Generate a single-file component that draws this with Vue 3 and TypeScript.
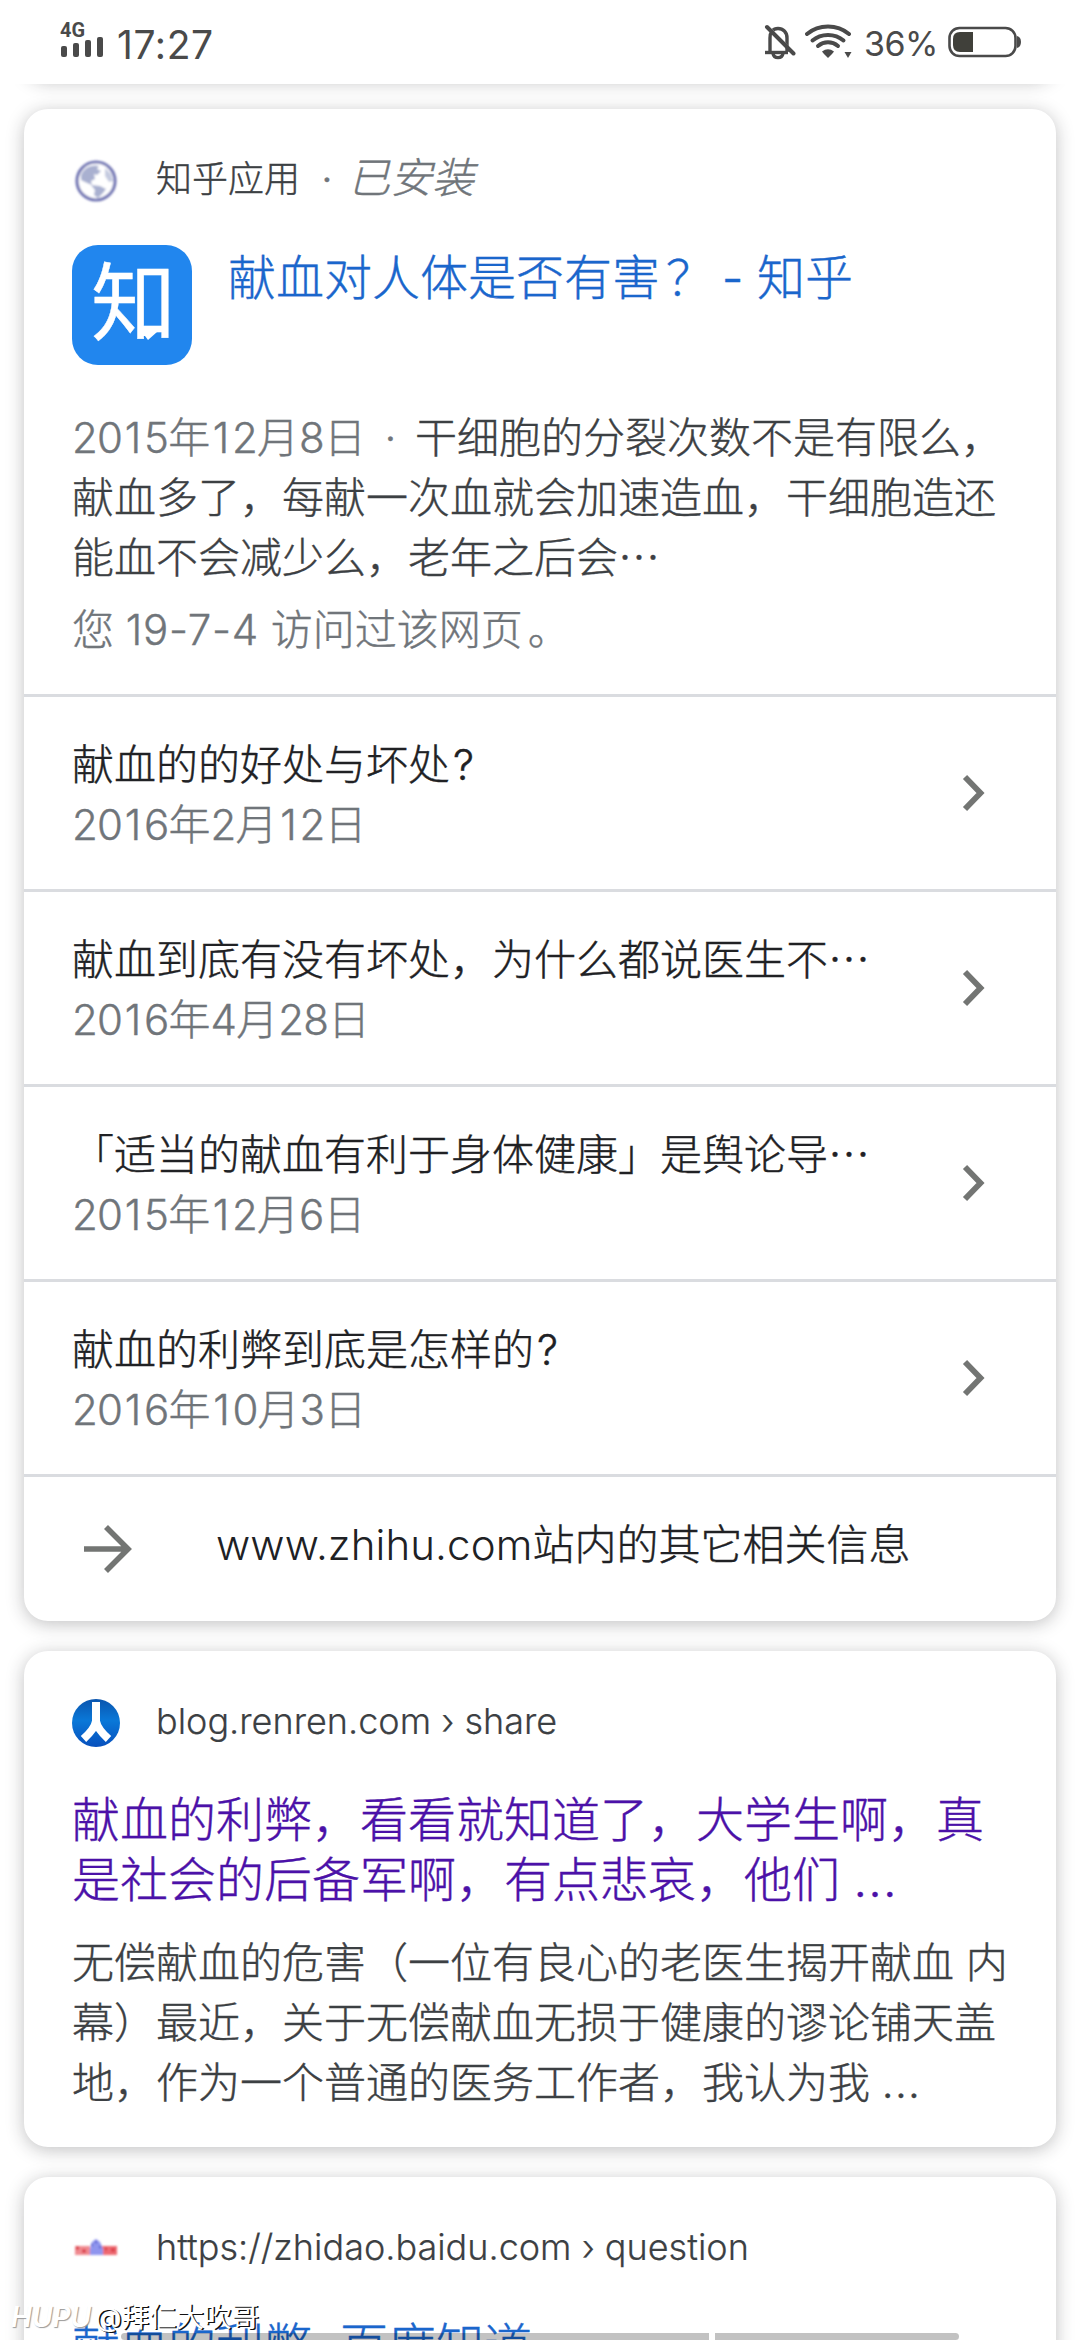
<script setup lang="ts">
interface Related {
  title: string
  end: string
  date: string
}

const related: Related[] = [
  { title: '献血的的好处与坏处', end: '?', date: '2016年2月12日' },
  { title: '献血到底有没有坏处，为什么都说医生不', end: '…', date: '2016年4月28日' },
  { title: '「适当的献血有利于身体健康」是舆论导', end: '…', date: '2015年12月6日' },
  { title: '献血的利弊到底是怎样的', end: '?', date: '2016年10月3日' },
]

const firstDate = '2015年12月8日'

// Splits a date so that the narrow figure 1 and the other figures can be spaced apart.
function pieces(date: string): { text: string; kind: string }[] {
  return date
    .split(/(1|[年月日])/)
    .filter((t) => t !== '')
    .map((text) => ({ text, kind: text === '1' ? 'one' : /\d/.test(text) ? 'fig' : '' }))
}
</script>

<template>
  <div class="screen">
    <header class="status">
      <svg class="signal" width="46" height="38" viewBox="0 0 46 38">
        <g fill="#4a4a4a">
          <rect x="1" y="26" width="6" height="11" rx="2" />
          <rect x="13" y="23" width="6" height="14" rx="2" />
          <rect x="25" y="20" width="6" height="17" rx="2" />
          <rect x="37" y="17" width="6" height="20" rx="2" />
        </g>
        <text x="0" y="16.5" class="net" textLength="25" lengthAdjust="spacingAndGlyphs">4G</text>
      </svg>
      <span class="clock">17:27</span>
      <span class="grow"></span>
      <svg class="bell" width="32" height="36" viewBox="0 0 32 36">
        <g fill="none" stroke="#4a4a4a" stroke-width="3.4">
          <path d="M6 27V14C6 8 9 4.5 14 4.5S23 8 23 14V28" />
          <path d="M1 28.5H24" />
          <path d="M9 29.5C10 35 18 35 19 29.5" />
        </g>
        <path d="M1 5.500L28 33" stroke="#fff" stroke-width="2.500" transform="translate(2.500 -3)" />
        <path d="M3 3L29.500 29.500" stroke="#4a4a4a" stroke-width="4" stroke-linecap="round" />
      </svg>
      <svg class="wifi" width="48" height="36" viewBox="0 0 48 36">
        <g fill="none" stroke="#4a4a4a" stroke-width="4" stroke-linecap="round">
          <path d="M2 10C14 0 32 0 44 10" />
          <path d="M7.500 16.500C16 9 30 9 38.500 16.500" />
          <path d="M13 22C19 17 27 17 33 22" />
        </g>
        <path d="M17 27.500Q23 23 29 27.500L27 30L23 34L19 30Z" fill="#4a4a4a" />
        <path d="M39.500 28H46.500L43 34Z" fill="#4a4a4a" />
      </svg>
      <span class="percent">36%</span>
      <svg class="battery" width="74" height="32" viewBox="0 0 74 32">
        <rect x="1.500" y="2" width="66" height="28" rx="10" fill="none" stroke="#4a4a4a" stroke-width="2.600" />
        <path d="M25 6V26H12Q5 26 5 19V13Q5 6 12 6Z" fill="#40403a" />
        <path d="M69 10Q73 11 73 16T69 22Z" fill="#4a4a4a" />
      </svg>
    </header>

    <main class="results">
      <section class="card previous"></section>

      <section class="card app-card">
        <div class="source">
          <svg class="favicon" width="48" height="48" viewBox="0 0 48 48">
            <defs>
              <filter id="soft"><feGaussianBlur stdDeviation="0.8" /></filter>
            </defs>
            <g filter="url(#soft)">
              <circle cx="24" cy="24" r="19" fill="#fff" stroke="#7276b4" stroke-width="3.200" />
              <path d="M9 18C12 11 19 7 27 9L25 12L29 14L25 18L22 17L23 22L19 24L20 28L15 26L9 23Z" fill="#a9b0d0" />
              <path d="M19 28L28 29L34 32L31 36L26 41L22 38L23 33Z" fill="#a9b0d0" />
              <path d="M33 11L39 17L41 24L37 25L33 19Z" fill="#c5cbe0" />
            </g>
          </svg>
          <span class="site">知乎应用</span>
          <span class="sep">·</span>
          <em class="installed">已安装</em>
        </div>

        <div class="app">
          <div class="app-icon">
            <span>知</span>
            <svg class="tail" width="14" height="9" viewBox="0 0 14 9"><path d="M0 0H14L5 8L2 4H0Z" fill="#fff" /></svg>
          </div>
          <h3 class="title blue">献血对人体是否有害<span class="ask">？</span><span class="dash">-</span>知乎</h3>
        </div>

        <p class="snippet first">
          <span class="line"><span class="muted"><span v-for="(p, i) in pieces(firstDate)" :key="i" :class="p.kind">{{ p.text }}</span><span class="dot">·</span></span>干细胞的分裂次数不是有限么，</span>
          <span class="line">献血多了，每献一次血就会加速造血，干细胞造还</span>
          <span class="line">能血不会减少么，老年之后会<span class="cjk">…</span></span>
        </p>
        <p class="visited">您 <span class="vnum">19-7-4</span> 访问过该网页<span class="stop">。</span></p>

        <a v-for="item in related" :key="item.title" class="related">
          <span class="related-text">
            <span class="related-title">{{ item.title }}<span :class="item.end === '…' ? 'cjk' : 'mark'">{{ item.end }}</span></span>
            <span class="related-date"><span v-for="(p, i) in pieces(item.date)" :key="i" :class="p.kind">{{ p.text }}</span></span>
          </span>
          <svg width="24" height="38" viewBox="0 0 24 38">
            <path d="M3 3L18.500 19L3 35" fill="none" stroke="#737573" stroke-width="5.800" />
          </svg>
        </a>

        <a class="more">
          <svg width="48" height="48" viewBox="0 0 48 48">
            <path d="M0 24H44M22 2L44 24L22 46" fill="none" stroke="#737573" stroke-width="5.600" />
          </svg>
          <span class="more-text"><span class="host">www.zhihu.com</span>站内的其它相关信息</span>
        </a>
      </section>

      <section class="card web-card">
        <div class="source">
          <svg class="favicon" width="48" height="48" viewBox="0 0 48 48">
            <defs>
              <linearGradient id="rr" x1="0" y1="0" x2="0" y2="1">
                <stop offset="0" stop-color="#0a55ae" />
                <stop offset=".45" stop-color="#0a78d8" />
                <stop offset="1" stop-color="#0750bd" />
              </linearGradient>
            </defs>
            <circle cx="24" cy="24" r="24" fill="url(#rr)" />
            <path d="M24 3V22C23 29 17 35 11.500 40M24 22C25 29 31 35 36.500 40" fill="none" stroke="#fff" stroke-width="8" />
          </svg>
          <span class="site s2">blog.renren.com › share</span>
        </div>
        <h3 class="title purple">
          <span class="line">献血的利弊，看看就知道了，大学生啊，真</span>
          <span class="line">是社会的后备军啊，有点悲哀，他们 <span class="dots">...</span></span>
        </h3>
        <p class="snippet">
          <span class="line">无偿献血的危害（一位有良心的老医生揭开献血 内</span>
          <span class="line">幕）最近，关于无偿献血无损于健康的谬论铺天盖</span>
          <span class="line">地，作为一个普通的医务工作者，我认为我 <span class="dots">...</span></span>
        </p>
      </section>

      <section class="card last-card">
        <div class="source">
          <svg class="favicon" width="48" height="48" viewBox="0 0 48 48">
            <g filter="url(#soft)">
              <rect x="3" y="21" width="15" height="9" fill="#f08a90" />
              <rect x="30" y="21" width="15" height="9" fill="#ee6b72" />
              <path d="M4 23H7M10 26H14M33 24H35M39 25H43" stroke="#d83b45" stroke-width="3" />
              <path d="M18 30V24L20 17L24 14L28 17L31 24V30Z" fill="#8f95ee" />
              <path d="M19 20H21M23 17H25M27 22H29" stroke="#5a60d0" stroke-width="2.500" />
            </g>
          </svg>
          <span class="site s2">https://zhidao.baidu.com › question</span>
        </div>
        <h3 class="title blue"><span class="line">献血的利弊<span class="under">_</span>百度知道</span></h3>
      </section>
    </main>

    <div class="scrollbar"><i class="seg-a"></i><i class="seg-b"></i></div>
    <div class="watermark"><span class="brand">HUPU</span><span class="user">@拜仁大吹哥</span></div>
  </div>
</template>

<style>
html,
body {
  margin: 0;
  background: #fff;
  overflow: hidden;
}
</style>

<style scoped>
.screen {
  position: relative;
  width: 1080px;
  height: 2340px;
  overflow: hidden;
  display: flex;
  flex-direction: column;
  background: #fff;
  font-family: Inter, "Noto Sans CJK SC", sans-serif;
  font-weight: 300;
  color: #3c4043;
  white-space: nowrap;
}
.status {
  position: relative;
  z-index: 2;
  flex: none;
  box-sizing: border-box;
  height: 84px;
  padding: 0 58px 0 60px;
  display: flex;
  align-items: flex-start;
  background: #fff;
  color: #4a4a4a;
}
.signal { margin-top: 20px; overflow: visible; }
.net { font: 700 20px Roboto, sans-serif; fill: #4a4a4a; }
.clock {
  margin: 15px 0 0 11px;
  font-size: 39px;
  line-height: 60px;
  font-weight: 400;
  letter-spacing: 0.6px;
}
.grow { flex: 1; }
.bell { margin: 24px 9px 0 0; }
.wifi { margin: 24px 11px 0 0; }
.percent {
  width: 70px;
  margin: 14px 14px 0 0;
  font-size: 34px;
  line-height: 60px;
  font-weight: 400;
  letter-spacing: -0.5px;
}
.battery { margin: 26px 0 0; }

.results {
  flex: 1;
  min-height: 0;
  display: flex;
  flex-direction: column;
  gap: 30px;
  padding: 0 24px;
  -webkit-text-stroke: 0.4px;
}
.card {
  flex: none;
  border-radius: 24px;
  background: #fff;
  box-shadow: 0 3px 18px rgba(32, 33, 36, 0.28);
}
.previous { height: 60px; margin-top: -65px; }
.app-card { height: 1512px; }
.web-card { height: 496px; }
.last-card { height: 300px; }

.source {
  display: flex;
  align-items: center;
  padding: 48px 48px 0;
  height: 48px;
}
.favicon { flex: none; margin-right: 36px; }
.site { font-size: 36px; line-height: 44px; padding-bottom: 4px; }
.s2 { -webkit-text-stroke: 0.2px; }
.sep {
  width: 54px;
  padding-bottom: 4px;
  text-align: center;
  font-size: 42px;
  line-height: 44px;
  color: #70757a;
}
.installed {
  margin-left: -6px;
  font-size: 42px;
  line-height: 44px;
  padding-bottom: 6px;
  color: #70757a;
}

.app { display: flex; margin: 40px 48px 0; }
.app-icon {
  position: relative;
  flex: none;
  box-sizing: border-box;
  width: 120px;
  height: 120px;
  margin-right: 36px;
  padding-left: 3px;
  border-radius: 26px;
  background: #2186ee;
  color: #fff;
  text-align: center;
  font-size: 85px;
  line-height: 118px;
  font-weight: 400;
}
.tail { position: absolute; left: 71px; top: 87px; }
.title { margin: 0; font-size: 48px; line-height: 60px; font-weight: 300; }
.app .title { padding-top: 3px; }
.blue { color: #1a66cc; }
.purple { color: #4b11a8; }
.ask { display: inline-block; width: 42px; padding-left: 6px; }
.dash { display: inline-block; width: 49px; text-align: center; }
.line { display: block; }

.snippet {
  margin: 23px 48px 0;
  font-size: 42px;
  line-height: 60px;
}
.snippet.first { margin-top: 43px; }
.title.purple, .last-card .title { margin: 43px 48px 0; }
.muted, .visited { color: #70757a; }
.fig { letter-spacing: -0.8px; }
.one { margin: 0 2.7px; }
.dot { display: inline-block; width: 49px; text-align: center; }
.cjk { font-family: "Noto Sans CJK SC", sans-serif; line-height: 0; }
.mark { margin-left: 3px; }
.dots { letter-spacing: 1.2px; }
.vnum { letter-spacing: 0.7px; }
.stop { margin-left: 5px; }
.visited {
  margin: 12px 48px 34px;
  font-size: 42px;
  line-height: 60px;
}

.related {
  box-sizing: border-box;
  height: 195px;
  border-top: 3px solid #dadce0;
  display: flex;
  align-items: center;
  justify-content: space-between;
  padding: 0 70px 0 48px;
}
.related-text {
  display: flex;
  flex-direction: column;
  padding-top: 3px;
  font-size: 42px;
  line-height: 60px;
}
.related-title { color: #202124; }
.related-date { color: #70757a; }
.more {
  box-sizing: border-box;
  height: 147px;
  border-top: 3px solid #dadce0;
  display: flex;
  align-items: center;
  padding-left: 60px;
  color: #202124;
}
.more-text {
  margin-left: 84px;
  padding-bottom: 8px;
  font-size: 42px;
  line-height: 60px;
}
.host { letter-spacing: 0.1px; -webkit-text-stroke: 0; }
.under { display: inline-block; width: 28px; }

.scrollbar {
  position: absolute;
  left: 121px;
  top: 2333px;
  display: flex;
  gap: 6px;
}
.scrollbar i { height: 7px; background: rgba(0, 0, 0, 0.24); }
.seg-a { width: 588px; border-radius: 4px 0 0 4px; }
.seg-b { width: 244px; border-radius: 0 4px 4px 0; }
.watermark {
  position: absolute;
  left: 11px;
  top: 2298px;
  display: flex;
  color: #fff;
  line-height: 38px;
}
.brand {
  width: 84px;
  font-size: 28px;
  font-style: italic;
  font-weight: 600;
  text-shadow: 1px 1px 1px #999;
}
.user { font-size: 27.5px; font-weight: 400; text-shadow: 1.5px 1px 0 #111; }
</style>
